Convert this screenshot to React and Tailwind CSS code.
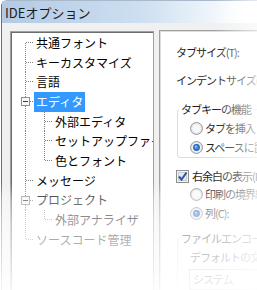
import React from 'react';

// tree on the left of the options dialog
const treeItems = [
  { label: '共通フォント', level: 0, first: true },
  { label: 'キーカスタマイズ', level: 0 },
  { label: '言語', level: 0 },
  { label: 'エディタ', level: 0, expander: true, selected: true },
  { label: '外部エディタ', level: 1 },
  { label: 'セットアップファイル', level: 1 },
  { label: '色とフォント', level: 1, lastChild: true },
  { label: 'メッセージ', level: 0 },
  { label: 'プロジェクト', level: 0, expander: true },
  { label: '外部アナライザ', level: 1, lastChild: true },
  { label: 'ソースコード管理', level: 0, last: true },
];

const dot = { stroke: '#808080', strokeWidth: 1, strokeDasharray: '1 1' };

const Gutter = ({ item }) => {
  const c = 9.5;
  if (item.level === 0) {
    return (
      <svg width="22" height="19.7" className="shrink-0" shapeRendering="crispEdges">
        <line x1="13.5" y1={item.first ? c : 0} x2="13.5" y2={item.last ? c : 19.7} {...dot} />
        {item.expander ? (
          <>
            <line x1="18" y1={c} x2="22" y2={c} {...dot} />
            <rect x="9.5" y="5.5" width="8" height="8" fill="#f7f7f7" stroke="#919191" strokeWidth="1" />
            <line x1="11" y1={c} x2="16" y2={c} stroke="#3a3a3a" strokeWidth="1" />
          </>
        ) : (
          <line x1="14" y1={c} x2="22" y2={c} {...dot} />
        )}
      </svg>
    );
  }
  return (
    <svg width="41" height="19.7" className="shrink-0" shapeRendering="crispEdges">
      <line x1="13.5" y1="0" x2="13.5" y2="19.7" {...dot} />
      <line x1="32.5" y1="0" x2="32.5" y2={item.lastChild ? c : 19.7} {...dot} />
      <line x1="33" y1={c} x2="41" y2={c} {...dot} />
    </svg>
  );
};

const TreeRow = ({ item }) => (
  <div className="flex h-[19.7px] items-stretch">
    <Gutter item={item} />
    <span
      className={
        item.selected
          ? 'flex items-center whitespace-nowrap bg-[#3399ff] px-[2px] text-white'
          : 'flex items-center whitespace-nowrap px-[2px] text-black'
      }
    >
      {item.label}
    </span>
  </div>
);

const Radio = ({ checked }) => (
  <svg width="13" height="13" className="shrink-0">
    <circle cx="6.5" cy="6.5" r="6" fill="#e4e4e4" stroke="#9b9b9b" strokeWidth="1" />
    <circle cx="6.5" cy="6.5" r="4.3" fill="#f8f8f8" />
    {checked && (
      <>
        <circle cx="6.5" cy="6.5" r="3.4" fill="#1f63b8" />
        <circle cx="6.5" cy="6.5" r="2.2" fill="#3d8fdc" />
        <circle cx="5.8" cy="5.6" r="1" fill="#a9d6f7" />
      </>
    )}
  </svg>
);

const Checkbox = () => (
  <svg width="13" height="13" className="shrink-0" shapeRendering="crispEdges">
    <rect x="0.5" y="0.5" width="12" height="12" fill="#f4f4f4" stroke="#8e8f8f" />
    <rect x="2.5" y="2.5" width="8" height="8" fill="#e6e9ee" stroke="#c9ced6" />
    <path d="M3 6.5 L5.5 9.5 L10.5 2.5" fill="none" stroke="#2d56a8" strokeWidth="2" shapeRendering="auto" />
  </svg>
);

const RadioRow = ({ checked, label, indent }) => (
  <div className={`flex h-[19px] items-center gap-[2px] ${indent}`}>
    <Radio checked={checked} />
    <span className="whitespace-nowrap">{label}</span>
  </div>
);

export default function App() {
  return (
    <div className="relative h-[290px] w-[257px] overflow-hidden bg-white font-['Noto_Sans_CJK_JP','Noto_Sans',sans-serif]">
      <div className="ml-[1px] flex h-full flex-col rounded-tl-[6px] border-l border-t border-l-[#6f6f6f] border-t-[#a9b9cb] bg-[#f0f0f0]">
        {/* title bar */}
        <div className="flex h-[22px] shrink-0 items-center bg-[linear-gradient(to_right,#b3cae4,#cddff1_55%,#ffffff_95%)] pl-[3px] pt-[1px] text-[13px] leading-none text-[#1b1b1b]">
          IDEオプション
        </div>

        <div className="flex items-start gap-[5px] pl-[8px] pt-[7px]">
          {/* tree */}
          <div className="mt-[1px] h-[270px] w-[144px] shrink-0 overflow-hidden border border-[#a0a0a0] bg-white pl-[1px] pt-[1px] text-[12px] leading-none shadow-[inset_1px_1px_0_#6d6d6d]">
            {treeItems.map((item) => (
              <TreeRow key={item.label} item={item} />
            ))}
          </div>

          {/* settings page */}
          <div className="h-[270px] w-[140px] shrink-0 border border-[#a0a0a0] bg-white pl-[16px] pt-[11px] text-[11px] leading-none tracking-[-1px] text-[#1e1e1e] shadow-[inset_1px_1px_0_#dcdcdc]">
            <div className="flex h-[20px] items-center whitespace-nowrap">タブサイズ(T):</div>
            <div className="mt-[8px] flex h-[20px] items-center whitespace-nowrap">インデントサイズ(I):</div>

            <fieldset className="ml-[1px] mt-[12px] rounded-[3px] border border-[#d5dfe5] pb-0 pt-[3px]">
              <legend className="ml-[1px] h-[14px] px-[2px] leading-[14px] whitespace-nowrap">タブキーの機能</legend>
              <RadioRow label="タブを挿入" indent="pl-[12px]" />
              <RadioRow checked label="スペースに置換" indent="pl-[12px]" />
            </fieldset>

            <div className="mt-[9px] flex h-[18px] items-center gap-[3px]">
              <Checkbox />
              <span className="whitespace-nowrap">右余白の表示(R)</span>
            </div>
            <RadioRow label="印刷の境界線" indent="pl-[14px]" />
            <RadioRow checked label="列(C):" indent="pl-[14px]" />

            <fieldset className="ml-[1px] mt-[8px] rounded-[3px] border border-[#d5dfe5] pl-[12px] pt-[4px]">
              <legend className="-ml-[11px] h-[14px] px-[2px] leading-[14px] whitespace-nowrap">ファイルエンコーディング</legend>
              <div className="flex h-[16px] items-center whitespace-nowrap">デフォルトの文字コード(D):</div>
              <div className="-ml-[1px] mt-[4px] flex h-[21px] w-[90px] items-center border border-[#abadb3] pl-[3px]">
                システム
              </div>
            </fieldset>
          </div>
        </div>
      </div>

      {/* screenshot fade toward the right and bottom edges */}
      <div className="pointer-events-none absolute inset-0 bg-[linear-gradient(to_right,rgba(255,255,255,0)_83%,rgba(255,255,255,0.7)_100%)]" />
      <div className="pointer-events-none absolute inset-0 bg-[linear-gradient(to_bottom,rgba(255,255,255,0)_63%,rgba(255,255,255,0.4)_69%,rgba(255,255,255,0.6)_77%,rgba(255,255,255,0.7)_85%,rgba(255,255,255,0.8)_92%,rgba(255,255,255,0.92)_100%)]" />
    </div>
  );
}
